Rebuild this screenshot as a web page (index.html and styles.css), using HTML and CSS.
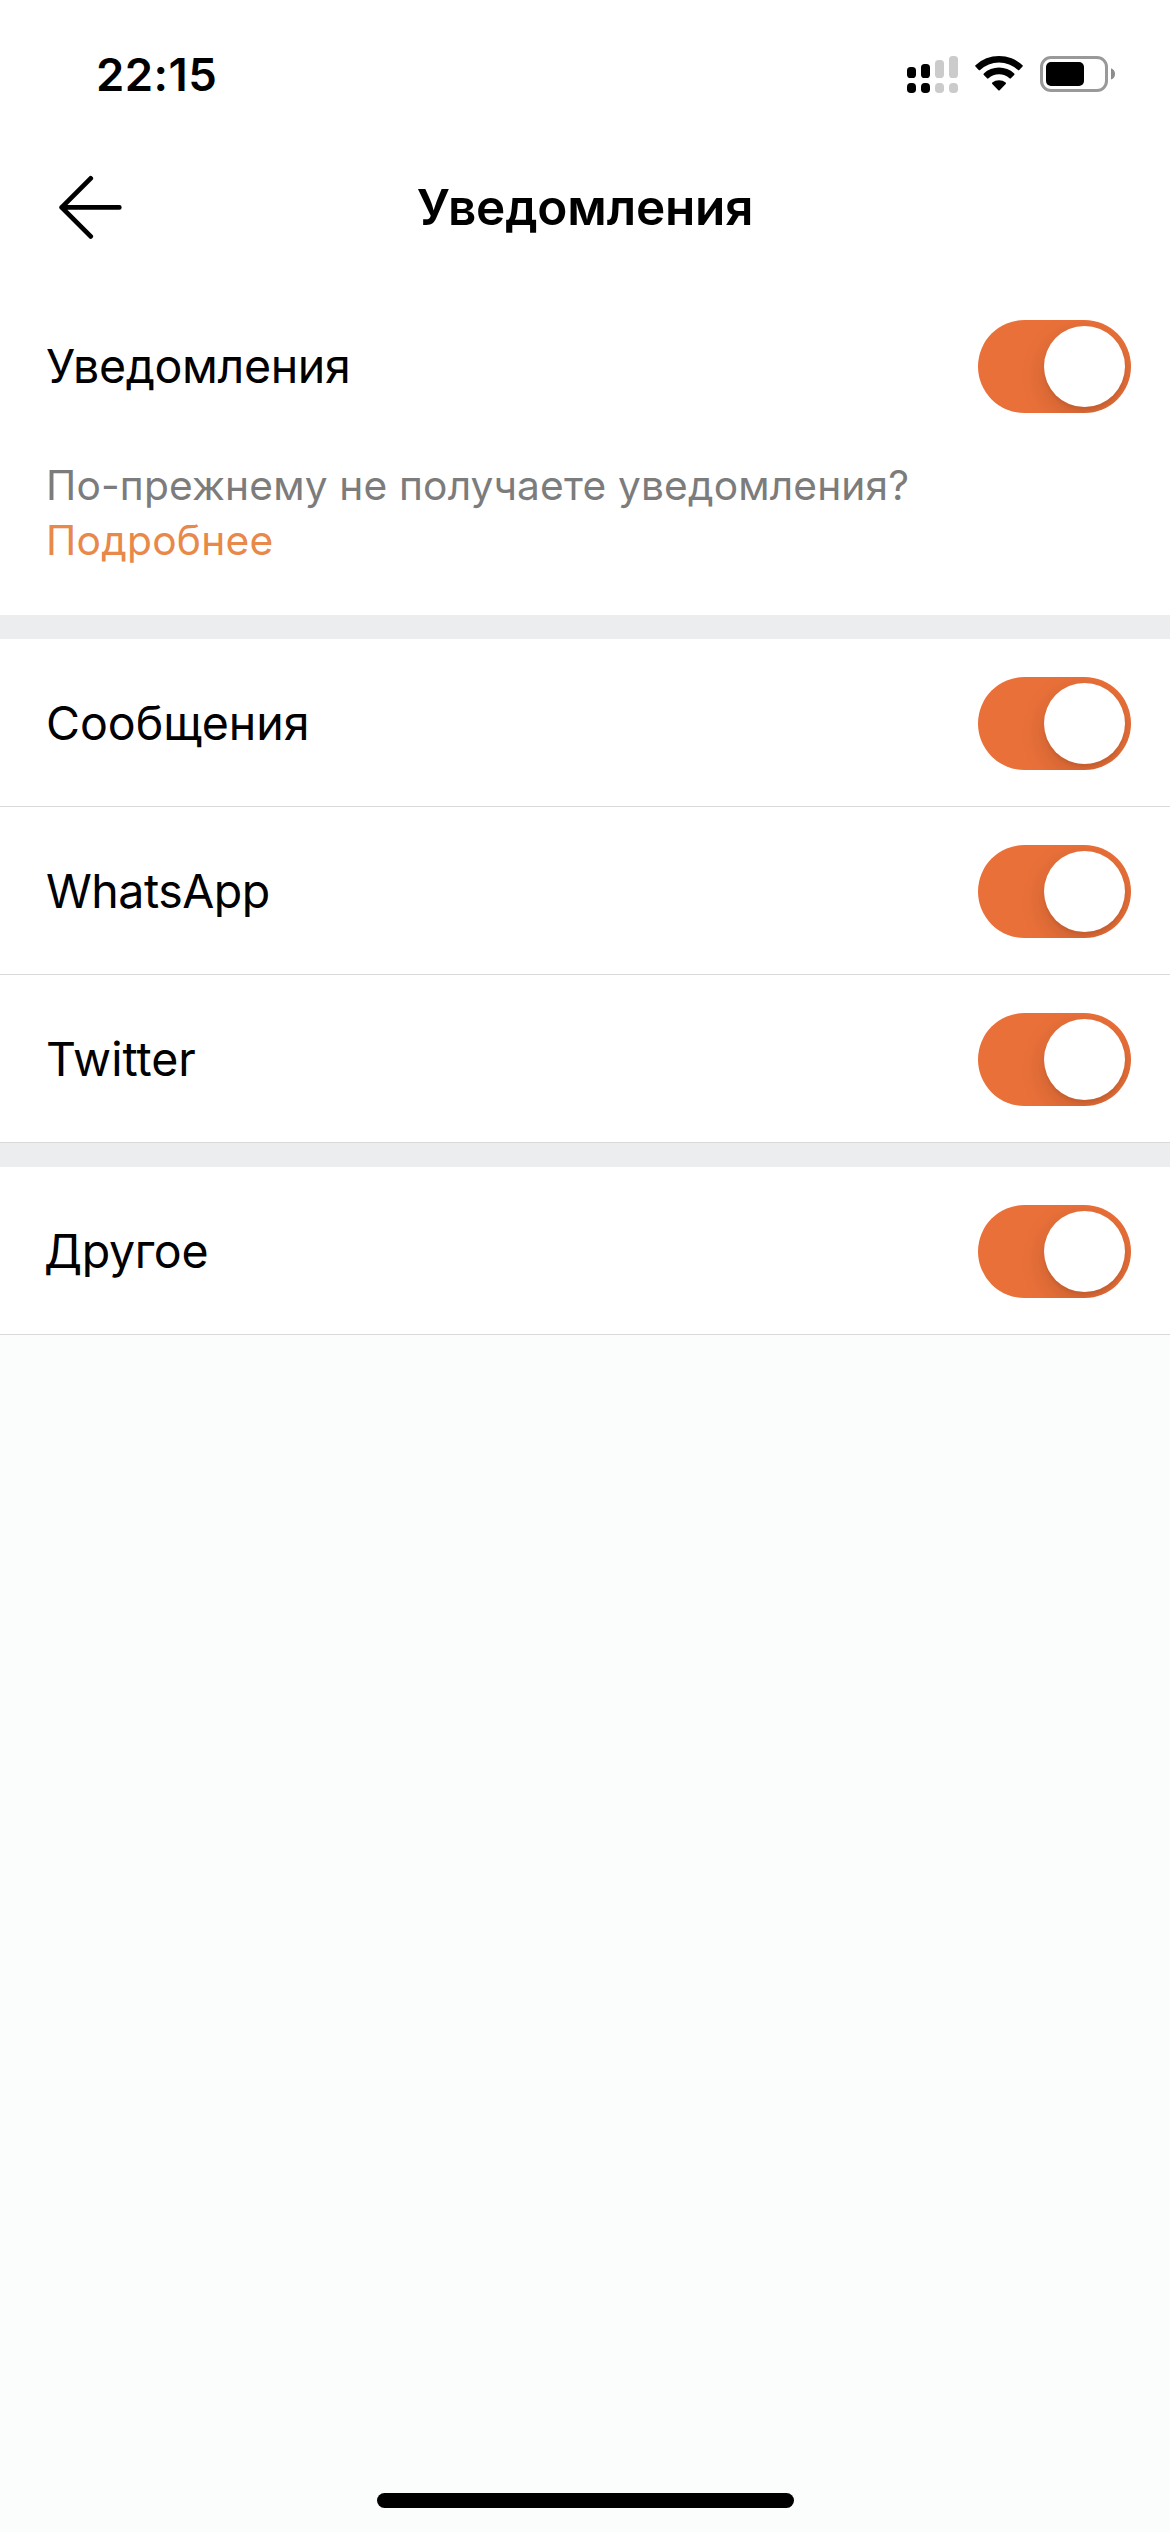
FILE: index.html
```html
<!DOCTYPE html>
<html lang="ru">
<head>
  <meta charset="utf-8">
  <title>Уведомления</title>
  <link rel="stylesheet" href="styles.css">
</head>
<body>
  <div class="screen">
    <div class="status-bar">
      <span class="time">22:15</span>
      <div class="status-icons">
        <svg class="signal" width="52" height="38" viewBox="0 0 52 38">
          <g fill="#000">
            <rect x="0" y="11" width="9" height="11" rx="3.6"/>
            <rect x="14" y="8" width="9" height="14" rx="3.6"/>
            <rect x="0" y="27" width="9" height="10" rx="3.8"/>
            <rect x="14" y="27" width="9" height="10" rx="3.8"/>
          </g>
          <g fill="#cbcbcb">
            <rect x="28" y="4" width="9" height="18" rx="3.6"/>
            <rect x="42" y="0" width="9" height="22" rx="3.6"/>
            <rect x="28" y="27" width="9" height="10" rx="3.8"/>
            <rect x="42" y="27" width="9" height="10" rx="3.8"/>
          </g>
        </svg>
        <svg class="wifi" width="48" height="36" viewBox="0 0 48 36">
          <path d="M0.5 10.2A34.4 34.4 0 0 1 47.500 10.200Q48.200 10.900 47.500 11.600L44.300 15Q43.600 15.700 42.900 15A27.500 27.500 0 0 0 5.100 15Q4.400 15.700 3.700 15L0.500 11.600Q-0.200 10.900 0.500 10.200Z"/>
          <path d="M8.800 18.500A22.500 22.500 0 0 1 39.200 18.500Q39.900 19.200 39.200 19.900L35.900 23.300Q35.200 24 34.500 23.300A15.500 15.500 0 0 0 13.500 23.300Q12.800 24 12.100 23.300L8.800 19.900Q8.100 19.200 8.800 18.500Z"/>
          <path d="M17.300 27.600A10.500 10.500 0 0 1 30.700 27.600Q31.400 28.300 30.700 29L24.700 35.200Q24 35.900 23.300 35.200L17.300 29Q16.600 28.300 17.300 27.600Z"/>
        </svg>
        <svg class="battery" width="75" height="36" viewBox="0 0 75 36">
          <rect x="1.500" y="1.500" width="65" height="33" rx="9.500" fill="none" stroke="#999" stroke-width="3"/>
          <rect x="6" y="6" width="38" height="24" rx="5" fill="#000"/>
          <path d="M71 12.200Q75 13.800 75 18T71 23.500Z" fill="#8c8c8c"/>
        </svg>
      </div>
    </div>

    <header class="nav">
      <svg class="back" width="64" height="64" viewBox="0 0 64 64">
        <path d="M32.700 3.400L3.700 32.400L32.700 61.400M3.700 32.400H61.300"/>
      </svg>
      <h1 class="title">Уведомления</h1>
    </header>

    <main>
      <section class="group">
        <div class="row row-plain">
          <span class="label label-tight">Уведомления</span>
          <span class="toggle"><span class="knob"></span></span>
        </div>
        <p class="help">По-прежнему не получаете уведомления?<br><a class="more">Подробнее</a></p>
      </section>

      <section class="group group-spaced">
        <div class="row">
          <span class="label">Сообщения</span>
          <span class="toggle"><span class="knob"></span></span>
        </div>
        <div class="row">
          <span class="label label-latin">WhatsApp</span>
          <span class="toggle"><span class="knob"></span></span>
        </div>
        <div class="row">
          <span class="label">Twitter</span>
          <span class="toggle"><span class="knob"></span></span>
        </div>
      </section>

      <section class="group group-spaced">
        <div class="row">
          <span class="label label-tight label-outset">Другое</span>
          <span class="toggle"><span class="knob"></span></span>
        </div>
      </section>
    </main>

    <footer class="home-area"><div class="home-indicator"></div></footer>
  </div>
</body>
</html>
```
FILE: styles.css
```css
* {
  box-sizing: border-box;
}

body {
  margin: 0;
  background: #fbfdfc;
  color: #000;
  font-family: Inter, "Liberation Sans", sans-serif;
}

.screen {
  display: flex;
  flex-direction: column;
  width: 1170px;
  height: 2532px;
}

.status-bar {
  display: flex;
  justify-content: space-between;
  align-items: flex-start;
  height: 132px;
  padding: 46px 55px 0 96px;
  background: #fff;
}

.time {
  font-size: 45.5px;
  font-weight: 600;
  line-height: 57px;
  letter-spacing: 0.44px;
}

.status-icons {
  display: flex;
  align-items: flex-start;
  padding-top: 9px;
}

.signal {
  margin-top: 1px;
  margin-right: 16px;
}

.wifi {
  margin-right: 17px;
}

.battery {
  margin-top: 1px;
}

.nav {
  display: grid;
  grid-template-columns: 64px 1fr 64px;
  align-items: center;
  height: 150px;
  padding: 0 58px;
  background: #fff;
}

.back path {
  fill: none;
  stroke: #000;
  stroke-width: 4.8;
  stroke-linecap: round;
  stroke-linejoin: round;
}

.title {
  margin: 0;
  font-size: 49.5px;
  font-weight: 600;
  line-height: 60px;
  letter-spacing: -0.18px;
  text-align: center;
}

.group {
  background: #fff;
}

.group-spaced {
  border-top: 24px solid #ecedef;
}

.row {
  display: flex;
  justify-content: space-between;
  align-items: center;
  height: 168px;
  padding: 0 39px 0 46px;
  border-bottom: 1px solid #d9d9d9;
}

.row-plain {
  border-bottom-color: transparent;
}

.label {
  font-size: 46.5px;
  line-height: 56px;
}

.label-tight {
  letter-spacing: -0.36px;
}

.label-latin {
  letter-spacing: -0.5px;
}

.label-outset {
  margin-left: -2px;
}

.toggle {
  display: flex;
  justify-content: flex-end;
  width: 153px;
  height: 93px;
  margin-top: 2px;
  padding: 6px;
  overflow: hidden;
  border-radius: 47px;
  background: #e97039;
}

.knob {
  width: 81px;
  height: 81px;
  border-radius: 50%;
  background: #fff;
  box-shadow: 0 9px 24px rgba(0, 0, 0, 0.15), 0 3px 3px rgba(0, 0, 0, 0.06);
}

.help {
  height: 165px;
  margin: 0;
  padding: 8px 46px 0;
  color: #7c7c7c;
  font-size: 40.7px;
  line-height: 55px;
  letter-spacing: 0.16px;
}

.more {
  color: #e88849;
  letter-spacing: 0.26px;
}

.home-area {
  display: flex;
  justify-content: center;
  margin-top: auto;
  padding-bottom: 24px;
}

.home-indicator {
  width: 417px;
  height: 15px;
  border-radius: 8px;
  background: #000;
}
```
